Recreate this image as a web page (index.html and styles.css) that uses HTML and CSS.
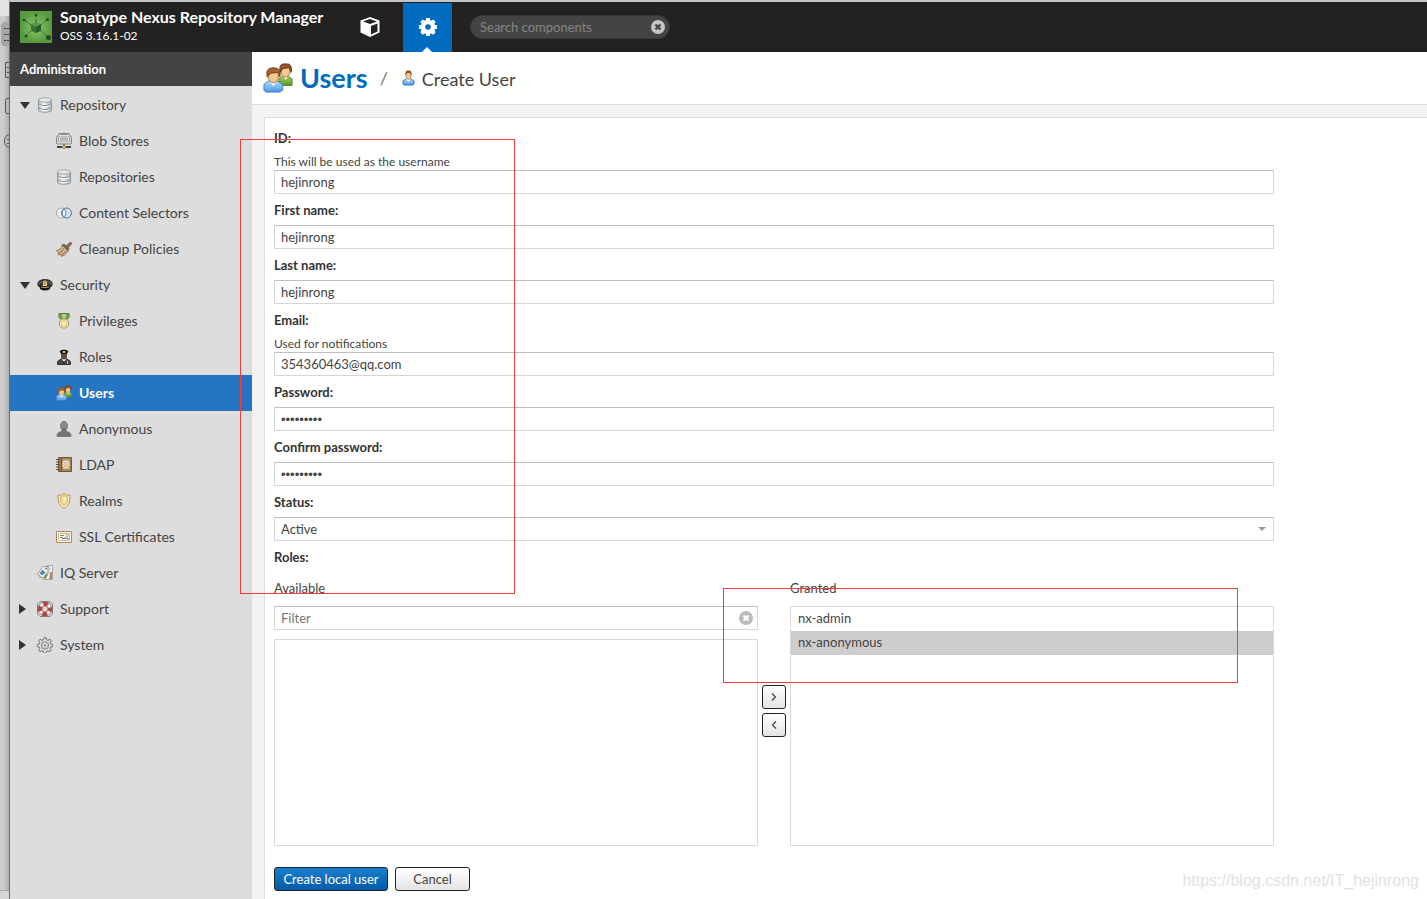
FILE: index.html
```html
<!DOCTYPE html>
<html lang="en">
<head>
<meta charset="utf-8">
<title>Users - Sonatype Nexus Repository Manager</title>
<link rel="stylesheet" href="styles.css">
</head>
<body>
<svg class="defs" aria-hidden="true">
  <defs>
    <linearGradient id="g-metal" x1="0" x2="1" y1="0" y2="0"><stop offset="0" stop-color="#aeb3b7"/><stop offset=".4" stop-color="#f4f7f9"/><stop offset="1" stop-color="#a5abb0"/></linearGradient>
    <linearGradient id="g-blue" x1="0" x2="0" y1="0" y2="1"><stop offset="0" stop-color="#b5dcff"/><stop offset="1" stop-color="#4f96e4"/></linearGradient>
    <linearGradient id="g-green" x1="0" x2="0" y1="0" y2="1"><stop offset="0" stop-color="#a6d25a"/><stop offset="1" stop-color="#5c9426"/></linearGradient>
    <radialGradient id="g-logo"><stop offset="0" stop-color="#8fc66b"/><stop offset="1" stop-color="#57993f"/></radialGradient>
    <symbol id="i-db" viewBox="0 0 16 16"><path d="M1.500 3v10c0 3 13 3 13 0V3z" fill="url(#g-metal)" stroke="#91979c"/><ellipse cx="8" cy="3" rx="6.500" ry="2.200" fill="#e3e7ea" stroke="#a2a7ab"/><path d="M2 7c1 2 11 2 12 0M2 11c1 2 11 2 12 0" fill="none" stroke="#858c92"/><path d="M2 8c1 2 11 2 12 0M2 12c1 2 11 2 12 0" fill="none" stroke="#fff" stroke-width=".7"/></symbol>
    <symbol id="i-blob" viewBox="0 0 16 16"><path d="M3 .5h10l2.500 4V10q0 1-1 1h-13q-1 0-1-1V4.500z" fill="#d8dadb" stroke="#818589"/><path d="M3.500 1.500h9M2.500 4h11v4h-11z" fill="#eee" stroke="#999da0"/><path d="M4 6h8" stroke="#73777a"/><path d="M8 11v2" stroke="#444"/><path d="M1 14h14" stroke="#444" stroke-width="2"/><path d="M6 14l2-2 2 2-2 2z" fill="#f0bd63" stroke="#987131" stroke-width=".7"/></symbol>
    <symbol id="i-content" viewBox="0 0 16 16"><circle cx="5.500" cy="8" r="5" fill="#eee" stroke="#a6a6a6"/><circle cx="10.500" cy="8" r="5" fill="#cfe1ee" fill-opacity=".8" stroke="#4d779c"/><path d="M8 4c-2.500 2.500-2.500 5.500 0 8 2.500-2.500 2.500-5.500 0-8z" fill="#f5f9fc" stroke="#5f88aa"/></symbol>
    <symbol id="i-broom" viewBox="0 0 16 16"><path d="M9.500 5.500L14 1.500q2-.5 1.500 1.500L12 7z" fill="#9c6b45" stroke="#65452f" stroke-width=".7"/><path d="M8 2.500l5.500 5.500-2 3-6.500-6.500z" fill="#6c6561"/><path d="M6.500 4.500l5.500 5.500Q10 14 5.500 15.500L4 13l-2 1 .5-2L.5 9.500Q5 9 6.500 4.500z" fill="#d5b78b" stroke="#896b4b" stroke-width=".8"/><path d="M3 12q4-2 5-5M5 14q4-2 5-4" stroke="#8b7152" fill="none"/></symbol>
    <symbol id="i-cap" viewBox="0 0 16 16"><ellipse cx="8" cy="7" rx="7.800" ry="5" fill="#353434"/><path d="M1 7q7-5 14 0" stroke="#77706b" fill="none"/><path d="M3 9h10v3q-5 3-10 0z" fill="#161616"/><path d="M4 10q4 1 8 0" stroke="#c8aa54" fill="none"/><path d="M6 5l2-2 2 2v4H6z" fill="#e9d27f"/><path d="M8 4v4" stroke="#846832"/></symbol>
    <symbol id="i-medal" viewBox="0 0 16 16"><path d="M3 .5h10v4L10.500 7h-5L3 4.500z" fill="#77a450" stroke="#527a35"/><path d="M6 1h4v4H6z" fill="#a9ce88"/><circle cx="8" cy="10.500" r="4.700" fill="#f2e4ac" stroke="#b49752"/><circle cx="8" cy="10.500" r="2.600" fill="#fff3cb" stroke="#d7c07b"/></symbol>
    <symbol id="i-role" viewBox="0 0 16 16"><path d="M1.500 15.500v-3L5 10h6l3.500 2.500v3z" fill="#4a4c4f" stroke="#303133"/><path d="M6 10l2 3 2-3z" fill="#f5f5f5"/><ellipse cx="8" cy="6.500" rx="3" ry="4" fill="#65493a"/><path d="M3.500 2q4.500-3 9 0L11 5H5z" fill="#252525"/><path d="M7 2h2v2H7zM11 12h1v3h-1z" fill="#e3bd48"/><path d="M8 12v3" stroke="#151515"/></symbol>
    <symbol id="i-users" viewBox="0 0 32 32"><path d="M17 22v-5l4-3h6l4 3v7H18z" fill="url(#g-green)" stroke="#5b842d"/><path d="M22 14l2 4 3-4z" fill="#fff"/><ellipse cx="24" cy="9" rx="4.800" ry="6" fill="#f4ca91" stroke="#af7840"/><path d="M18.500 10Q16 0 24 1q8-1 6 9l-2-5-7 1z" fill="#925527" stroke="#663b1d"/><path d="M1 29v-6l5-4h9l6 4v6l-3 2H3z" fill="url(#g-blue)" stroke="#387cc1"/><path d="M7 19l4 6 4-6z" fill="#fff"/><ellipse cx="11" cy="14" rx="5.500" ry="7" fill="#f4ca91" stroke="#af7840"/><path d="M4.500 15Q2 5 11 5q9 0 7 10l-2-5-8 1z" fill="#a3642f" stroke="#71421f"/></symbol>
    <symbol id="i-user" viewBox="0 0 16 16"><path d="M3 14v-3l3-2h5l3 2v3l-1 1H4z" fill="url(#g-blue)" stroke="#327bc5"/><path d="M6 9l2.500 3L11 9z" fill="#fff"/><ellipse cx="8.500" cy="5.500" rx="2.500" ry="4" fill="#f4ca91" stroke="#ae763e" stroke-width=".7"/><path d="M5.500 6Q4.500 0 8.500.500 12.500 0 11.500 6l-1.500-3H7z" fill="#915526"/></symbol>
    <symbol id="i-anon" viewBox="0 0 16 16"><ellipse cx="8" cy="5" rx="3.500" ry="4.700" fill="#898989" stroke="#686868" stroke-width=".7"/><path d="M6 8v2l-4 2q-1 1-1 3.500h14q0-2.500-1-3.500l-4-2V8z" fill="#747474" stroke="#5e5e5e" stroke-width=".6"/></symbol>
    <symbol id="i-ldap" viewBox="0 0 16 16"><path d="M2.500.500h13v14h-13z" fill="#a18259" stroke="#765531"/><path d="M5.500 1v13" stroke="#6e4d30"/><path d="M6.500 2.500h7v10h-7z" fill="#c7ae8b"/><circle cx="10" cy="7.500" r="3.200" fill="none" stroke="#fff1d7"/><circle cx="10" cy="7.500" r="1.200" fill="none" stroke="#fff1d7" stroke-width=".8"/><path d="M0 2.500h4M0 5h4M0 7.500h4M0 10h4M0 12.500h4" stroke="#5e4d40"/></symbol>
    <symbol id="i-shield" viewBox="0 0 16 16"><path d="M8 .5Q11 2.500 14 2.500 14.500 12 8 15.500 1.500 12 2 2.500 5 2.500 8 .5z" fill="#fff2bf" stroke="#b39350"/><path d="M8 2.500l4 1.500q0 6-4 9-4-3-4-9z" fill="#efd992" stroke="#cbad62" stroke-width=".8"/><path d="M6 5h4v2H8v3" stroke="#fff9df" fill="none"/></symbol>
    <symbol id="i-cert" viewBox="0 0 16 16"><path d="M.5 2.500h15v11H.5z" fill="#fff5dc" stroke="#a88b65"/><path d="M2.500 4.500h11v7h-11z" fill="#fffdf2" stroke="#cfbea0"/><path d="M4 6.500h4M4 8.500h3" stroke="#938776"/><circle cx="11" cy="6.500" r="1.500" fill="#efe1bd" stroke="#a48b65" stroke-width=".6"/><path d="M6 10l3-1 4 1" stroke="#446c9e" fill="none"/></symbol>
    <symbol id="i-iq" viewBox="0 0 16 16"><path d="M10 .500h5.500v14H8z" fill="#f5f5f5" stroke="#a5a5a5"/><path d="M13 7h2v7h-3z" fill="#b88b64"/><path d="M6 3l5-2 2 3-5 11-6-3z" fill="#fff" stroke="#a5a5a5"/><path d="M8 10l3-2-2 6-3-1z" fill="#74a255"/><path d="M.5 9L6 1.500l5 .5v4l-5 7z" fill="#fafafa" stroke="#9b9b9b"/><path d="M5.500 4.500l3 3-3 3-3-2z" fill="#4e87a6"/><circle cx="9" cy="3.800" r="1" fill="#777"/></symbol>
    <symbol id="i-support" viewBox="0 0 16 16"><path d="M3 .5h10L15.500 3v10L13 15.500H3L.5 13V3z" fill="#ddd" stroke="#858585"/><circle cx="8" cy="8" r="5" fill="none" stroke="#f5eeee" stroke-width="4"/><circle cx="8" cy="8" r="5" fill="none" stroke="#b8423f" stroke-width="4" stroke-dasharray="4.700 3.154" stroke-dashoffset="2.350"/><circle cx="8" cy="8" r="7" fill="none" stroke="#873937" stroke-width=".6"/><circle cx="8" cy="8" r="3" fill="#dedede" stroke="#94423e" stroke-width=".7"/></symbol>
    <symbol id="i-system" viewBox="0 0 16 16"><path d="M7 .7h2l.5 2 1.500.7 1.900-1.100 1.400 1.400-1.100 1.900.7 1.400 2 .5v2l-2 .5-.7 1.500 1.100 1.900-1.400 1.400-1.900-1.100-1.500.7-.5 2H7l-.5-2-1.500-.7-1.900 1.100-1.400-1.400L2.800 11.500 2.100 10l-2-.5v-2l2-.5.700-1.400-1.100-1.900 1.400-1.400L5 3.400l1.500-.7z" fill="#ddd" stroke="#6c6c6c"/><circle cx="8" cy="8.400" r="3.700" fill="#ccc" stroke="#888"/><circle cx="8" cy="8.400" r="1.500" fill="#888" stroke="#eee" stroke-width=".6"/></symbol>
    <symbol id="i-clear" viewBox="0 0 14 14"><circle cx="7" cy="7" r="7" fill="currentColor"/><path d="M4.500 4.500l5 5M9.500 4.500l-5 5" stroke="var(--cross)" stroke-width="2.400"/></symbol>
    <symbol id="i-chevron" viewBox="0 0 8 8"><path d="M2 .5L5.500 4 2 7.500" fill="none" stroke="#444" stroke-width="1.200"/></symbol>
  </defs>
</svg>

<div class="desktop">
  <div class="behind" aria-hidden="true">
    <svg width="9" height="160" viewBox="0 0 9 160" fill="none" stroke="#555">
      <path d="M0 0h9v16H0z" fill="#e2e2e2" stroke="none"/>
      <path d="M9 22H5q-4 0-4 4v16q0 4 4 4h4z" fill="#a6a6a6" stroke="none"/>
      <path d="M4 28.500h2M7 28.500h2M4 34.500h2M7 34.500h2M4 40.500h2M7 40.500h2" stroke="#333"/>
      <path d="M9 62.500H5.500v15H9M7 67.500h2M7 72.500h2M9 98.500H7q-1.500 0-1.500 2v11q0 2 1.500 2h2M9 134.500q-4.500 1-4.500 6.500t4.500 6.500M7 139.500h2M7 143.500h2"/>
    </svg>
    <div class="behind-foot"></div>
  </div>

  <div class="app">
    <header class="topbar">
      <svg class="logo" viewBox="0 0 32 32" role="img" aria-label="Nexus">
        <path d="M0 0h32v32H0z" fill="url(#g-logo)"/>
        <path d="M16 11V4M21 14l6-5M21 20l7 6M11 20l-5 5M11 14L4 9" stroke="#305f2a" stroke-dasharray="3 1.500"/>
        <path d="M16 11l5 2.500v6L16 22l-5-2.500v-6z" fill="#34752f"/><path d="M16 11l5 2.500-5 2.500-5-2.500z" fill="#599646"/><path d="M16 16l5-2.500v6L16 22z" fill="#285c29"/>
        <g fill="#234e23"><circle cx="16" cy="4" r="1.300"/><circle cx="27.500" cy="8.500" r="1.500"/><circle cx="28.500" cy="26.500" r="2.500"/><circle cx="6" cy="25" r="1.500"/><circle cx="4" cy="9" r="1.300"/></g>
      </svg>
      <div class="brand"><strong>Sonatype Nexus Repository Manager</strong><span>OSS 3.16.1-02</span></div>
      <nav class="modes" aria-label="Mode">
        <button class="mode" type="button" aria-label="Browse"><svg width="20" height="20" viewBox="0 0 20 20"><path d="M10 0l9.500 3.500v12L10 20 .5 15.500v-12z" fill="#fff"/><path d="M3 4.500L10 2l7 2.500L10 7zM11 9l6.500-2.500v8L11 17.500z" fill="#222"/></svg></button>
        <button class="mode mode-on" type="button" aria-label="Administration"><svg width="18" height="18" viewBox="0 0 18 18"><path d="M7.200 0h3.600l.5 2.300 1 .4 2-1.300 2.400 2.400-1.300 2 .4 1 2.200.4v3.600l-2.200.5-.4 1 1.300 2-2.400 2.400-2-1.300-1 .4-.5 2.200H7.200l-.5-2.200-1-.4-2 1.300-2.400-2.400 1.300-2-.4-1L0 10.800V7.200l2.200-.4.400-1-1.300-2 2.400-2.400 2 1.300 1-.4z" fill="#fff"/><circle cx="9" cy="9" r="2.800" fill="#006bbf"/></svg></button>
      </nav>
      <div class="search">
        <input type="text" placeholder="Search components" aria-label="Search components">
        <button type="button" class="clear" aria-label="Clear search"><svg width="14" height="14"><use href="#i-clear"/></svg></button>
      </div>
    </header>

    <div class="body">
      <aside class="sidebar">
        <h2 class="side-title">Administration</h2>
        <nav class="tree" aria-label="Administration">
          <a class="node" href="#"><i class="arrow open"></i><svg><use href="#i-db"/></svg>Repository</a>
          <a class="node leaf" href="#"><svg><use href="#i-blob"/></svg>Blob Stores</a>
          <a class="node leaf" href="#"><svg><use href="#i-db"/></svg>Repositories</a>
          <a class="node leaf" href="#"><svg><use href="#i-content"/></svg>Content Selectors</a>
          <a class="node leaf" href="#"><svg><use href="#i-broom"/></svg>Cleanup Policies</a>
          <a class="node" href="#"><i class="arrow open"></i><svg><use href="#i-cap"/></svg>Security</a>
          <a class="node leaf" href="#"><svg><use href="#i-medal"/></svg>Privileges</a>
          <a class="node leaf" href="#"><svg><use href="#i-role"/></svg>Roles</a>
          <a class="node leaf selected" href="#" aria-current="page"><svg><use href="#i-users"/></svg>Users</a>
          <a class="node leaf" href="#"><svg><use href="#i-anon"/></svg>Anonymous</a>
          <a class="node leaf" href="#"><svg><use href="#i-ldap"/></svg>LDAP</a>
          <a class="node leaf" href="#"><svg><use href="#i-shield"/></svg>Realms</a>
          <a class="node leaf" href="#"><svg><use href="#i-cert"/></svg>SSL Certificates</a>
          <a class="node" href="#"><i class="arrow"></i><svg><use href="#i-iq"/></svg>IQ Server</a>
          <a class="node" href="#"><i class="arrow closed"></i><svg><use href="#i-support"/></svg>Support</a>
          <a class="node" href="#"><i class="arrow closed"></i><svg><use href="#i-system"/></svg>System</a>
        </nav>
      </aside>

      <main class="main">
        <div class="crumbs">
          <svg width="30" height="30"><use href="#i-users"/></svg>
          <h1>Users</h1>
          <span class="slash">/</span>
          <svg width="16" height="16"><use href="#i-user"/></svg>
          <span class="current">Create User</span>
        </div>
        <form class="panel">
          <div class="form">
            <label for="id">ID:</label>
            <p class="hint">This will be used as the username</p>
            <input class="field" id="id" type="text" value="hejinrong">
            <label for="first">First name:</label>
            <input class="field" id="first" type="text" value="hejinrong">
            <label for="last">Last name:</label>
            <input class="field" id="last" type="text" value="hejinrong">
            <label for="email">Email:</label>
            <p class="hint">Used for notifications</p>
            <input class="field" id="email" type="text" value="354360463@qq.com">
            <label for="pw">Password:</label>
            <input class="field" id="pw" type="password" value="password1">
            <label for="pw2">Confirm password:</label>
            <input class="field" id="pw2" type="password" value="password1">
            <label for="status">Status:</label>
            <div class="select"><select class="field" id="status"><option>Active</option></select></div>
            <label for="filter">Roles:</label>
            <div class="roles">
              <div class="col">
                <div class="col-title">Available</div>
                <div class="filter">
                  <input class="field" id="filter" type="text" placeholder="Filter">
                  <button type="button" class="clear" aria-label="Clear filter"><svg width="14" height="14"><use href="#i-clear"/></svg></button>
                </div>
                <ul class="list available"></ul>
              </div>
              <div class="movers">
                <button class="btn" type="button" aria-label="Add"><svg width="8" height="8"><use href="#i-chevron"/></svg></button>
                <button class="btn" type="button" aria-label="Remove"><svg class="flip" width="8" height="8"><use href="#i-chevron"/></svg></button>
              </div>
              <div class="col">
                <div class="col-title">Granted</div>
                <ul class="list"><li>nx-admin</li><li class="picked">nx-anonymous</li></ul>
              </div>
            </div>
            <div class="actions">
              <button class="btn primary" type="button">Create local user</button>
              <button class="btn cancel" type="button">Cancel</button>
            </div>
          </div>
        </form>
      </main>
    </div>
  </div>
</div>
<div class="mark mark-fields"></div>
<div class="mark mark-roles"></div>
<div class="watermark">https://blog.csdn.net/IT_hejinrong</div>
</body>
</html>
```
FILE: styles.css
```css
* { box-sizing: border-box; }
body { margin: 0; position: relative; font-family: Lato, "Liberation Sans", sans-serif; font-size: 13px; color: #444; background: #fff; }
h1, h2, p, ul { margin: 0; padding: 0; }
button, input, select { font: inherit; color: inherit; margin: 0; }
button { cursor: pointer; padding: 0; }
svg { display: block; flex: none; }
.defs { position: absolute; width: 0; height: 0; }

.desktop { display: flex; min-height: 100vh; }
.behind { width: 9px; flex: none; display: flex; flex-direction: column; justify-content: space-between; background: linear-gradient(90deg, #ccc 40%, #adadad); }
.behind-foot { height: 9px; border-top: 1px solid #aaa; background: #d6d6d6; }
.app { flex: 1; min-width: 0; display: flex; flex-direction: column; border-left: 1px solid #2580cc; border-top: 2px solid #c3c5c6; }

.topbar { height: 50px; background: #222; color: #fff; display: flex; align-items: center; padding-left: 10px; }
.logo { width: 32px; height: 32px; }
.brand { width: 285px; padding-left: 8px; display: flex; flex-direction: column; white-space: nowrap; }
.brand strong { font-size: 16px; line-height: 18px; }
.brand span { font-size: 12px; line-height: 20px; }
.modes { display: flex; align-self: stretch; padding-top: 1px; }
.mode { width: 66px; border: 0; background: none; display: grid; place-items: center; position: relative; padding-bottom: 2px; }
.mode-on { width: 49px; background: #006bbf; }
.mode-on::after { content: ""; position: absolute; bottom: 0; left: 19px; border: 5px solid transparent; border-top: 0; border-bottom-color: #fff; }
.search { margin-left: 18px; width: 200px; height: 24px; border-radius: 12px; background: #444; border: 1px solid #383838; display: flex; align-items: center; padding: 0 4px 0 9px; }
.search input { flex: 1; min-width: 0; border: 0; background: none; outline: 0; padding: 0; color: #fff; }
.search input::placeholder { color: #858585; }
.clear { --cross: #fff; border: 0; background: none; color: #bbb; }
.search .clear { --cross: #444; color: #c4c4c4; }

.body { flex: 1; display: flex; }
.sidebar { width: 242px; flex: none; background: #ddd; }
.side-title { height: 34px; background: #444; color: #fff; font-size: 13px; line-height: 34px; padding-left: 10px; margin-bottom: 1px; }
.tree { display: flex; flex-direction: column; }
.node { height: 36px; display: flex; align-items: center; padding: 0 0 2px 10px; font-size: 14px; color: #444; text-decoration: none; white-space: nowrap; }
.node svg { width: 16px; height: 16px; margin: 2px 7px 0 0; }
.leaf { padding-left: 46px; }
.selected { background: #2476c3; color: #fff; font-weight: bold; }
.arrow { width: 17px; padding-top: 2px; }
.arrow::before { content: ""; display: block; width: 0; }
.open::before { border: 5px solid transparent; border-top: 7px solid #333; border-bottom: 0; }
.closed::before { margin-left: -1px; border: 5px solid transparent; border-left: 7px solid #333; border-right: 0; }

.main { flex: 1; min-width: 0; background: #f3f3f3; display: flex; flex-direction: column; }
.crumbs { height: 53px; background: #fff; border-bottom: 1px solid #ddd; display: flex; align-items: center; padding: 0 0 1px 11px; }
.crumbs h1 { color: #006bbf; font-size: 27px; line-height: 32px; margin-left: 7px; }
.slash { margin: 0 12px 0 12px; font-size: 18px; color: #777; }
.current { margin-left: 6px; font-size: 18px; padding-top: 2px; }
.panel { flex: 1; margin: 12px 0 0 12px; background: #fff; border: solid #ddd; border-width: 1px 0 0 1px; padding: 4px 9px 8px; }
.form { max-width: 1000px; }
.form label { display: block; font-weight: bold; color: #333; height: 31px; line-height: 29px; padding-top: 2px; }
.hint { font-size: 12px; line-height: 17px; }
.field { display: block; width: 100%; height: 24px; border: 1px solid #d6d6d6; border-top-color: #bfbfbf; border-radius: 0; background: #fff; padding: 0 6px; outline: 0; }
.field::placeholder { color: #777; }
.field[type="password"] { font-family: "Liberation Sans", sans-serif; }
.select { position: relative; }
.select select { appearance: none; }
.select::after { content: ""; position: absolute; right: 8px; top: 10px; border: 4px solid transparent; border-top-color: #999; border-bottom: 0; pointer-events: none; }
.roles { display: flex; gap: 4px; align-items: stretch; }
.col { flex: 1; min-width: 0; display: flex; flex-direction: column; height: 274px; }
.col-title { height: 34px; line-height: 33px; }
.filter { position: relative; margin-bottom: 9px; }
.filter .clear { position: absolute; right: 5px; top: 5px; }
.list { flex: 1; list-style: none; border: 1px solid #d9d9d9; }
.list li { height: 24px; line-height: 23px; padding: 0 7px; }
.list .picked { background: #cdcdcd; }
.movers { width: 24px; padding-top: 113px; display: flex; flex-direction: column; gap: 4px; }
.btn { height: 24px; border: 1px solid #222; border-radius: 3px; background: linear-gradient(#fff, #e4e4e4); display: grid; place-items: center; }
.flip { transform: rotate(180deg); }
.actions { display: flex; gap: 7px; padding-top: 21px; }
.primary { width: 114px; color: #fff; background: linear-gradient(#1b7fce, #005ba8); }
.cancel { width: 75px; }

.mark { position: absolute; border: 1px solid #f53b3b; pointer-events: none; }
.mark-fields { left: 240px; top: 139px; width: 275px; height: 455px; }
.mark-roles { left: 723px; top: 588px; width: 515px; height: 95px; }
.watermark { position: absolute; right: 8px; bottom: 8px; font: 16px/20px "Liberation Sans", Arial, sans-serif; color: #e2e2e2; pointer-events: none; }
```
